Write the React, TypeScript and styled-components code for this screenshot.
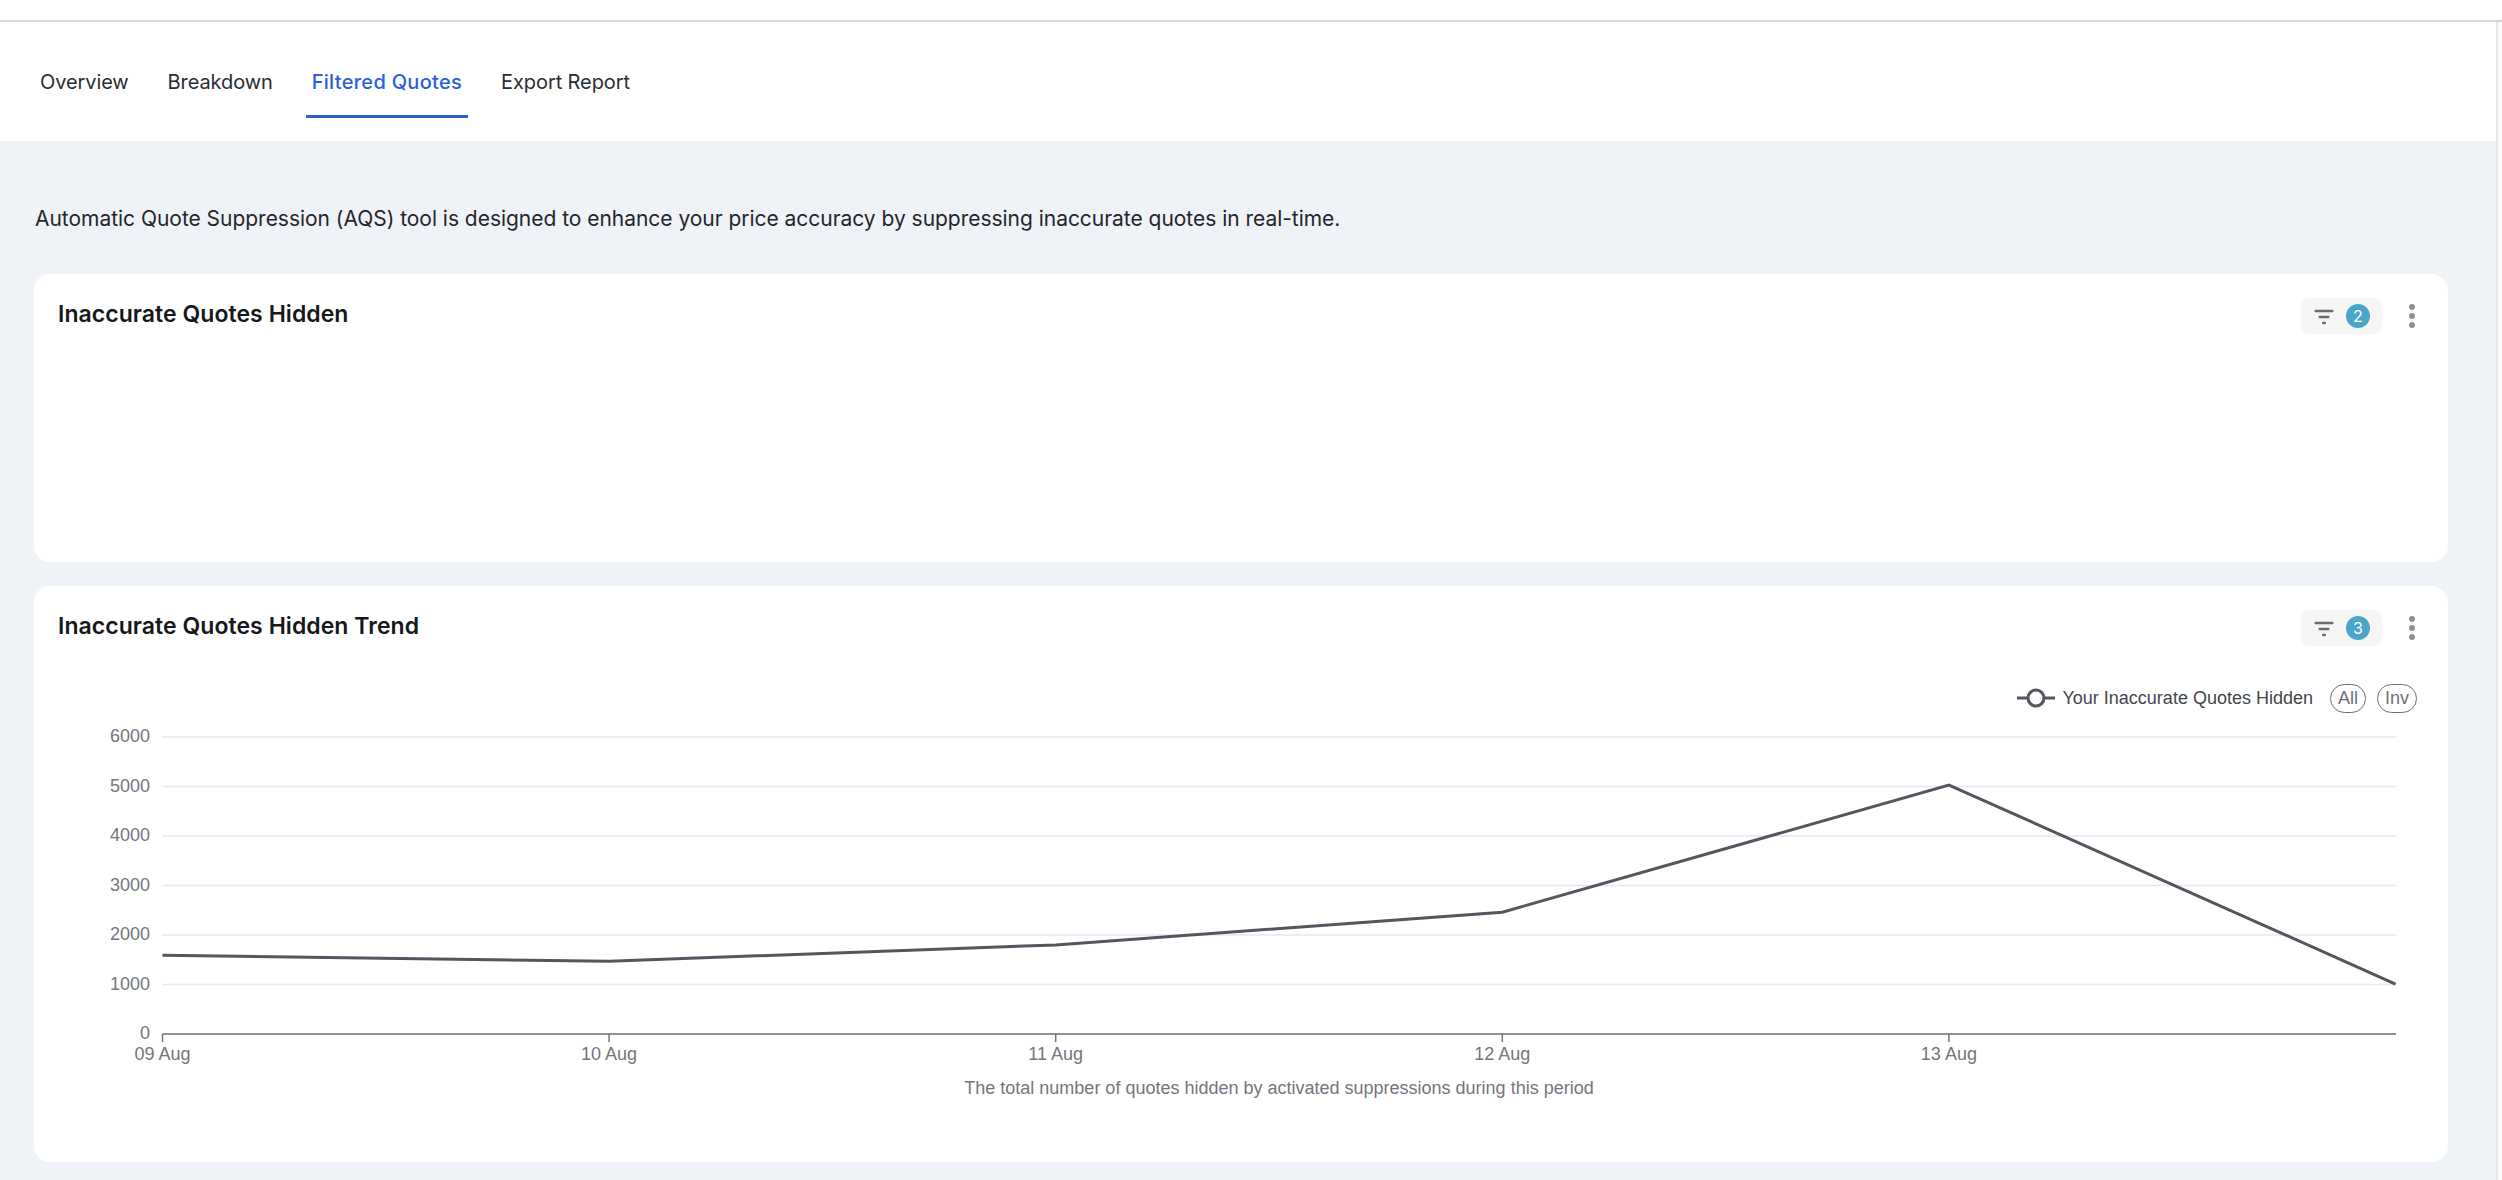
import { FC } from "react";
import styled, { createGlobalStyle } from "styled-components";

const GlobalStyle = createGlobalStyle`
  html, body {
    margin: 0;
    padding: 0;
    background: #eff2f7;
  }
  body {
    font-family: "Inter", "Liberation Sans", sans-serif;
    overflow: hidden;
  }
`;

const Page = styled.div`
  width: 2502px;
  height: 1180px;
  overflow: hidden;
  display: flex;
  flex-direction: column;
`;
const TopBar = styled.div`
  height: 20px;
  flex: none;
  background: #fff;
  border-bottom: 2px solid #d5d7dc;
`;
const Body = styled.div`
  flex: 1;
  display: flex;
  min-height: 0;
`;
const Main = styled.div`
  flex: 1;
  min-width: 0;
`;
const ScrollTrack = styled.div`
  width: 4px;
  background: #fafafa;
  border-left: 2px solid #e6e6e6;
`;
const TabBar = styled.nav`
  height: 119px;
  background: #fff;
  display: flex;
  align-items: flex-start;
  padding: 34px 0 0 34px;
  box-sizing: border-box;
  gap: 27px;
`;
const Tab = styled.a<{ $active?: boolean }>`
  display: block;
  height: 62px;
  box-sizing: border-box;
  padding: 13px 6px 0;
  font-size: 20px;
  line-height: 26px;
  letter-spacing: ${({ $active }) => ($active ? "0.3px" : "-0.1px")};
  font-weight: ${({ $active }) => ($active ? 500 : 400)};
  color: ${({ $active }) => ($active ? "#2a5fdc" : "#2a2d34")};
  border-bottom: 3px solid ${({ $active }) => ($active ? "#2a5fdc" : "transparent")};
`;
const Content = styled.main`
  padding: 65px 48px 0 34px;
`;
const Intro = styled.p`
  margin: 0 0 42px 1px;
  font-size: 21px;
  letter-spacing: -0.03px;
  line-height: 26px;
  color: #24262b;
`;
const Card = styled.section<{ $height: number }>`
  height: ${({ $height }) => $height}px;
  background: #fff;
  border-radius: 16px;
  margin-bottom: 24px;
  padding: 24px 33px 0 24px;
  box-sizing: border-box;
`;
const CardHeader = styled.header`
  display: flex;
  align-items: center;
  height: 36px;
`;
const CardTitle = styled.h2`
  flex: 1;
  margin: 0 0 4px;
  font-size: 23px;
  font-weight: 600;
  letter-spacing: 0.05px;
  color: #16181c;
`;
const FilterChip = styled.div`
  width: 81px;
  height: 36px;
  box-sizing: border-box;
  padding-left: 13px;
  display: flex;
  align-items: center;
  gap: 12px;
  background: #f6f6f6;
  border-radius: 8px;
`;
const Badge = styled.span`
  width: 24px;
  height: 24px;
  border-radius: 50%;
  background: #4ba5c9;
  color: #fff;
  font-size: 16px;
  display: flex;
  align-items: center;
  justify-content: center;
`;
const MoreButton = styled.div`
  width: 6px;
  margin-left: 27px;
  display: flex;
  flex-direction: column;
  gap: 3px;
`;
const Dot = styled.i`
  width: 6px;
  height: 6px;
  border-radius: 50%;
  background: #8b9297;
`;
const Legend = styled.div`
  display: flex;
  justify-content: flex-end;
  align-items: center;
  height: 30px;
  margin: 37px -2px 0 0;
  font-family: "Liberation Sans", Arial, sans-serif;
  font-size: 18px;
  color: #45464d;
`;
const LegendLabel = styled.span`
  margin: 0 17px 0 7px;
`;
const RangeGroup = styled.div`
  display: flex;
  gap: 11px;
`;
const RangePill = styled.span`
  height: 29px;
  box-sizing: border-box;
  padding: 0 7px;
  border: 1.5px solid #6e6e76;
  border-radius: 15px;
  color: #6e6e76;
  display: flex;
  align-items: center;
`;
const ChartFrame = styled.svg`
  display: block;
  margin: 0 -33px 0 -24px;
`;

const FilterIcon: FC = () => (
  <svg width="20" height="18" viewBox="0 0 20 18">
    <rect x="0.5" y="2.7" width="19" height="2.6" rx="1.3" fill="#6b6b6b" />
    <rect x="4.5" y="8.8" width="11" height="2.4" rx="1.2" fill="#6b6b6b" />
    <rect x="8" y="14.8" width="4" height="2.4" rx="1.2" fill="#6b6b6b" />
  </svg>
);

const Filter: FC<{ count: number }> = ({ count }) => (
  <FilterChip>
    <FilterIcon />
    <Badge>{count}</Badge>
  </FilterChip>
);

const More: FC = () => (
  <MoreButton>
    <Dot />
    <Dot />
    <Dot />
  </MoreButton>
);

const yTicks = [6000, 5000, 4000, 3000, 2000, 1000];
const xTicks = ["09 Aug", "10 Aug", "11 Aug", "12 Aug", "13 Aug"];
const plotLeft = 162.5;
const plotRight = 2396;
const stepX = 446.6;
const axisColor = "#75757d";
// plot height is 297px, the viewBox starts at the card's left edge
const plotHeight = 297;
const baseY = 321;

const yFor = (v: number) => baseY - (v / 6000) * plotHeight;
const series = [1590, 1470, 1800, 2460, 5030, 1010];

const TrendChart: FC = () => (
  <ChartFrame width="2414" height="400" viewBox="34 0 2414 400">
    {yTicks.map((v) => (
      <line key={v} x1={plotLeft} x2={plotRight} y1={yFor(v)} y2={yFor(v)} stroke="#e3e7f0" strokeWidth="1.5" />
    ))}
    {[...yTicks, 0].map((v) => (
      <text key={v} x="150" y={yFor(v) + 5} textAnchor="end" fontFamily="Liberation Sans" fontSize="18" fill={axisColor}>
        {v}
      </text>
    ))}
    <line x1={plotLeft} x2={plotRight} y1={baseY} y2={baseY} stroke="#8f8f96" strokeWidth="2" />
    {xTicks.map((label, i) => {
      const x = plotLeft + i * stepX;
      return (
        <g key={label}>
          <line x1={x} x2={x} y1={baseY} y2={baseY + 8} stroke={axisColor} strokeWidth="1.5" />
          <text x={x} y={baseY + 26} textAnchor="middle" fontFamily="Liberation Sans" fontSize="18" fill={axisColor}>
            {label}
          </text>
        </g>
      );
    })}
    <polyline
      points={series.map((v, i) => `${plotLeft + i * stepX},${yFor(v)}`).join(" ")}
      fill="none"
      stroke="#55555f"
      strokeWidth="3"
    />
    <text x="1279" y={baseY + 60} textAnchor="middle" fontFamily="Liberation Sans" fontSize="18" fill={axisColor}>
      The total number of quotes hidden by activated suppressions during this period
    </text>
  </ChartFrame>
);

const LegendMark: FC = () => (
  <svg width="38" height="20" viewBox="0 0 38 20">
    <line x1="0" x2="38" y1="10" y2="10" stroke="#55555f" strokeWidth="3" />
    <circle cx="19" cy="10" r="8" fill="#fff" stroke="#55555f" strokeWidth="3" />
  </svg>
);

const App: FC = () => {
  return (
    <Page>
      <GlobalStyle />
      <TopBar />
      <Body>
        <Main>
          <TabBar>
            <Tab>Overview</Tab>
            <Tab>Breakdown</Tab>
            <Tab $active>Filtered Quotes</Tab>
            <Tab>Export Report</Tab>
          </TabBar>
          <Content>
            <Intro>
              Automatic Quote Suppression (AQS) tool is designed to enhance your price accuracy by suppressing inaccurate
              quotes in real-time.
            </Intro>
            <Card $height={288}>
              <CardHeader>
                <CardTitle>Inaccurate Quotes Hidden</CardTitle>
                <Filter count={2} />
                <More />
              </CardHeader>
            </Card>
            <Card $height={576}>
              <CardHeader>
                <CardTitle>Inaccurate Quotes Hidden Trend</CardTitle>
                <Filter count={3} />
                <More />
              </CardHeader>
              <Legend>
                <LegendMark />
                <LegendLabel>Your Inaccurate Quotes Hidden</LegendLabel>
                <RangeGroup>
                  <RangePill>All</RangePill>
                  <RangePill>Inv</RangePill>
                </RangeGroup>
              </Legend>
              <TrendChart />
            </Card>
          </Content>
        </Main>
        <ScrollTrack />
      </Body>
    </Page>
  );
};

export default App;
